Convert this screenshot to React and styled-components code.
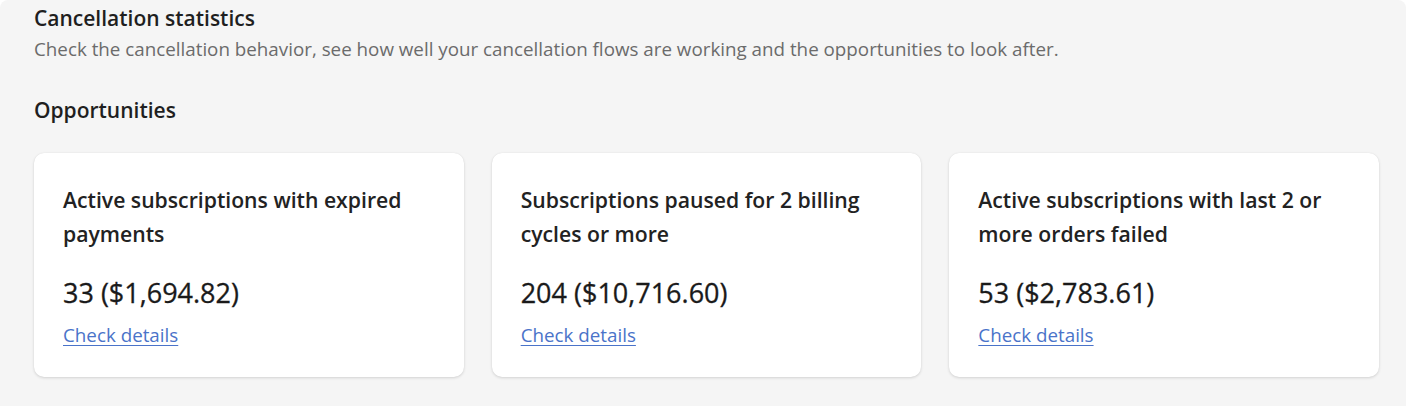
import React from 'react';
import styled, { createGlobalStyle } from 'styled-components';

const GlobalStyle = createGlobalStyle`
    body {
        margin: 0;
        background: #ffffff;
        font-family: "Open Sans", "Noto Sans", sans-serif;
    }
`;

const Panel = styled.section`
    width: 1406px;
    height: 406px;
    box-sizing: border-box;
    background: #f5f5f5;
    border-radius: 8px 8px 0 0;
    padding: 5px 27px 0 34px;
`;

const Title = styled.h2`
    margin: 0;
    font-size: 21px;
    line-height: 26px;
    font-weight: 600;
    color: #1f1f1f;
`;

const Description = styled.p`
    margin: 5px 0 0;
    font-size: 18.8px;
    line-height: 26px;
    color: #6b6b6b;
`;

const SectionTitle = styled.h3`
    margin: 35px 0 0;
    font-size: 21px;
    line-height: 26px;
    font-weight: 600;
    color: #1f1f1f;
`;

const CardGrid = styled.div`
    display: grid;
    grid-template-columns: repeat(3, 1fr);
    gap: 28px;
    margin-top: 30px;
`;

const Card = styled.div`
    height: 224px;
    box-sizing: border-box;
    background: #ffffff;
    border-radius: 10px;
    box-shadow: 0 1px 3px rgba(0, 0, 0, 0.14), 0 0 1px rgba(0, 0, 0, 0.08);
    padding: 30px 29px;
`;

const CardTitle = styled.div`
    font-size: 21.2px;
    line-height: 34px;
    font-weight: 600;
    color: #222222;
`;

const Amount = styled.div`
    margin-top: 25px;
    font-size: 27px;
    line-height: 34px;
    font-weight: 500;
    color: #1a1a1a;
    -webkit-text-stroke: 0.3px #1a1a1a;
`;

const DetailsLink = styled.a`
    display: inline-block;
    margin-top: 13px;
    font-size: 18.8px;
    line-height: 24px;
    color: #4a73c9;
    text-decoration: underline;
    text-underline-offset: 3px;
`;

const opportunities = [
    { title: 'Active subscriptions with expired payments', amount: '33 ($1,694.82)' },
    { title: 'Subscriptions paused for 2 billing cycles or more', amount: '204 ($10,716.60)' },
    { title: 'Active subscriptions with last 2 or more orders failed', amount: '53 ($2,783.61)' },
];

const App = () => {
    return (
        <>
            <GlobalStyle />
            <Panel>
                <Title>Cancellation statistics</Title>
                <Description>
                    Check the cancellation behavior, see how well your cancellation flows are working and the opportunities to look after.
                </Description>
                <SectionTitle>Opportunities</SectionTitle>
                <CardGrid>
                    {opportunities.map((item) => (
                        <Card key={item.amount}>
                            <CardTitle>{item.title}</CardTitle>
                            <Amount>{item.amount}</Amount>
                            <DetailsLink href="#">Check details</DetailsLink>
                        </Card>
                    ))}
                </CardGrid>
            </Panel>
        </>
    );
};

export default App;
